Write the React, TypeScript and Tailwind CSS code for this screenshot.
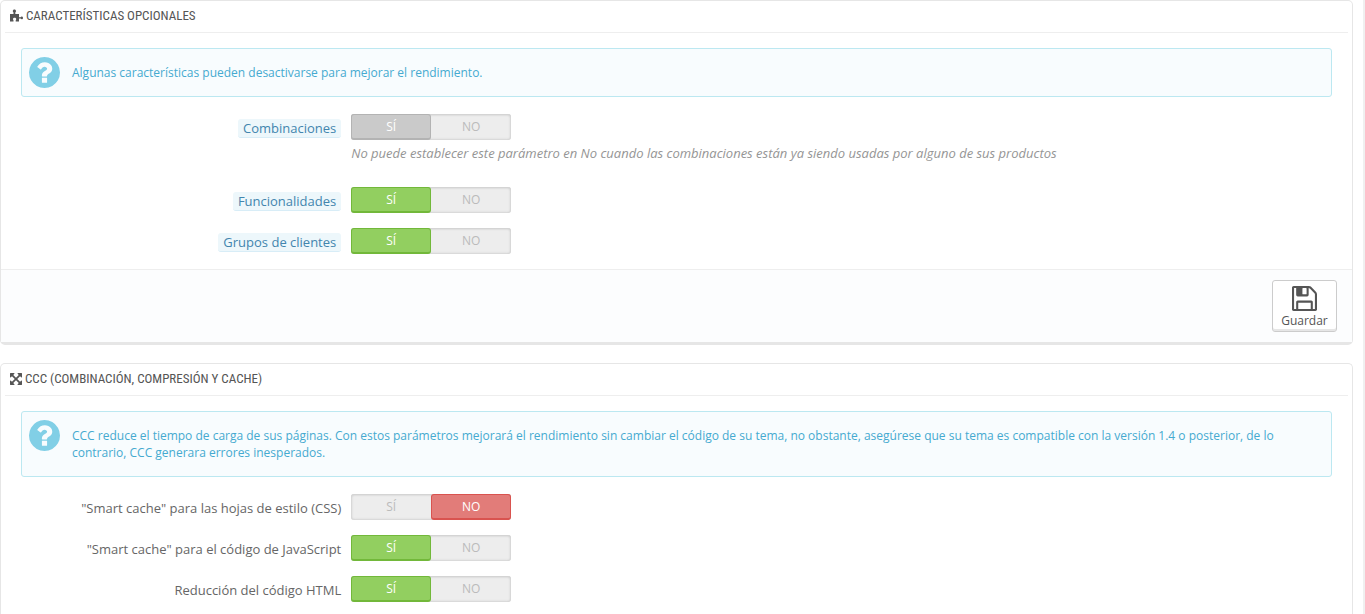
import { useState, type ReactNode } from 'react'

type SwitchTone = 'green' | 'gray'

interface SwitchRowProps {
  name: string
  label: string
  initial: boolean
  tooltip?: boolean
  disabled?: boolean
  help?: string
}

function PuzzleIcon() {
  return (
    <svg viewBox="0 0 13 13" className="w-[13px] h-[13px] shrink-0" fill="currentColor" aria-hidden="true">
      <path d="M0 5h3.500V3.500C2.900 3.100 2.800 2.600 2.800 2.100C2.800 1.100 3.500.5 4.400.5S6 1.100 6 2.100C6 2.600 5.900 3.100 5.300 3.500V5H9v3.200h1.600C10.900 7.700 11.200 7.500 11.700 7.500C12.500 7.500 13 8.100 13 8.900S12.500 10.300 11.700 10.300C11.200 10.300 10.900 10.100 10.600 9.600H9V12.500H5.700V11.200C6 10.800 6.200 10.500 6.200 10C6.200 9.200 5.400 8.700 4.600 8.700S3 9.200 3 10C3 10.500 3.200 10.800 3.500 11.200V12.500H0z" />
    </svg>
  )
}

function ArrowsIcon() {
  return (
    <svg viewBox="128 128 1536 1536" className="w-3 h-3 shrink-0" fill="currentColor" aria-hidden="true">
      <path d="M1411 541l-355 355 355 355 144-144q29-31 70-14 39 17 39 59v448q0 26-19 45t-45 19h-448q-42 0-59-40-17-39 14-69l144-144-355-355-355 355 144 144q31 30 14 69-17 40-59 40h-448q-26 0-45-19t-19-45v-448q0-42 40-59 39-17 69 14l144 144 355-355-355-355-144 144q-19 19-45 19-12 0-24-5-40-17-40-59v-448q0-26 19-45t45-19h448q42 0 59 40 17 39-14 69l-144 144 355 355 355-355-144-144q-31-30-14-69 17-40 59-40h448q26 0 45 19t19 45v448q0 42-39 59-13 5-25 5-26 0-45-19z" />
    </svg>
  )
}

function QuestionIcon() {
  return (
    <svg viewBox="128 128 1536 1536" className="w-[31px] h-[31px] shrink-0 text-[#81cfe6]" fill="currentColor" aria-hidden="true">
      <path d="M1024 1376v-192q0-14-9-23t-23-9h-192q-14 0-23 9t-9 23v192q0 14 9 23t23 9h192q14 0 23-9t9-23zm256-672q0-88-55.500-163t-138.500-116-170-41q-243 0-371 213-15 24 8 42l132 100q7 6 19 6 16 0 25-12 53-68 86-92 34-24 86-24 48 0 85.500 26t37.500 59q0 38-20 61t-68 45q-63 28-115.500 86.500t-52.500 125.500v36q0 14 9 23t23 9h192q14 0 23-9t9-23q0-19 21.500-49.500t54.500-49.500q32-18 49-28.500t46-35 44.500-48 28-60.500 12.500-81zm384 192q0 209-103 385.500t-279.500 279.500-385.500 103-385.500-103-279.500-279.500-103-385.500 103-385.500 279.500-279.500 385.500-103 385.500 103 279.500 279.500 103 385.500z" />
    </svg>
  )
}

function SaveIcon() {
  return (
    <svg viewBox="128 128 1536 1536" className="w-[25px] h-[25px]" fill="currentColor" aria-hidden="true">
      <path d="M512 1536h768v-384h-768v384zm896 0h128v-896q0-14-10-38.500t-20-34.500l-281-281q-10-10-34-20t-39-10v416q0 40-28 68t-68 28h-576q-40 0-68-28t-28-68v-416h-128v1280h128v-416q0-40 28-68t68-28h832q40 0 68 28t28 68v416zm-384-928v-320q0-13-9.500-22.500t-22.500-9.500h-192q-13 0-22.500 9.500t-9.500 22.500v320q0 13 9.500 22.500t22.500 9.500h192q13 0 22.500-9.500t9.500-22.500zm640 32v928q0 40-28 68t-68 28h-1344q-40 0-68-28t-28-68v-1344q0-40 28-68t68-28h928q40 0 88 20t76 48l280 280q28 28 48 76t20 88z" />
    </svg>
  )
}

function PanelHeading({ icon, children }: { icon: ReactNode; children: ReactNode }) {
  return (
    <h3 className="mx-1 h-8 px-[5px] pb-[2px] flex items-center gap-[3px] border-b border-[#eee] font-['Roboto_Condensed','Open_Sans_Condensed',sans-serif] text-[13px] font-normal leading-4 text-[#555] uppercase">
      {icon}
      {children}
    </h3>
  )
}

function InfoAlert({ children }: { children: ReactNode }) {
  return (
    <div className="mb-[17px] flex items-start gap-3 rounded-[3px] border border-[#bce8f1] bg-[#f8fcfe] py-2 pl-[7px] pr-[50px]">
      <QuestionIcon />
      <p className="py-[7px] text-xs leading-[17px] text-[#45aad0]">{children}</p>
    </div>
  )
}

function SwitchRow({ name, label, initial, tooltip = false, disabled = false, help }: SwitchRowProps) {
  const [value, setValue] = useState(initial)
  const tone: SwitchTone = disabled ? 'gray' : 'green'

  const onClasses = {
    green: 'border-[#72b83a] bg-[#92cf60] text-white',
    gray: 'border-[#b3b3b3] bg-[#cacaca] text-white',
  }

  return (
    <div role="radiogroup" aria-labelledby={`${name}-label`} className="-mx-[5px] mb-[15px] flex items-start">
      <div className="w-1/4 shrink-0 px-[5px] pt-[5px] text-right text-[13px] leading-[18px]">
        <span
          id={`${name}-label`}
          className={
            tooltip
              ? 'inline-block rounded-[3px] border-b border-[#d8edf7] bg-[#edf7fb] px-[5px] text-[#4285ae]'
              : 'inline-block text-[#666]'
          }
        >
          {label}
        </span>
      </div>
      <div className="flex-1 px-[5px]">
        <div className="flex h-[26px] w-40 rounded-[3px] bg-[#ededed] text-center text-xs leading-6 text-[#bbb] shadow-[inset_0_0_2px_1px_#d4d4d4,inset_0_1px_2px_#ccc]">
          <label className={`w-1/2 rounded-[3px] border border-b-2 ${value ? onClasses[tone] : 'border-transparent'}`}>
            <input
              type="radio"
              name={name}
              className="sr-only"
              checked={value}
              disabled={disabled}
              onChange={() => setValue(true)}
            />
            SÍ
          </label>
          <label
            className={`w-1/2 rounded-[3px] border border-b-2 ${
              value ? 'border-transparent' : 'border-[#d9534f] bg-[#e27c79] text-white'
            }`}
          >
            <input
              type="radio"
              name={name}
              className="sr-only"
              checked={!value}
              disabled={disabled}
              onChange={() => setValue(false)}
            />
            NO
          </label>
        </div>
        {help && <p className="mt-[5px] mb-[10px] text-[13px] leading-[17px] text-[#959595] italic">{help}</p>}
      </div>
    </div>
  )
}

export default function App() {
  return (
    <main className="flex min-h-screen flex-col gap-[18px] border-r-2 border-[#f0f0f0] bg-white pr-[10px] font-['Open_Sans',sans-serif]">
      <section className="rounded-[5px] border border-b-[3px] border-[#e6e6e6]">
        <PanelHeading icon={<PuzzleIcon />}>Características opcionales</PanelHeading>
        <form onSubmit={(e) => e.preventDefault()}>
          <div className="px-5 pt-[15px]">
            <InfoAlert>Algunas características pueden desactivarse para mejorar el rendimiento.</InfoAlert>
            <SwitchRow
              name="combination"
              label="Combinaciones"
              initial
              tooltip
              disabled
              help="No puede establecer este parámetro en No cuando las combinaciones están ya siendo usadas por alguno de sus productos"
            />
            <SwitchRow name="feature" label="Funcionalidades" initial tooltip />
            <SwitchRow name="customer_group" label="Grupos de clientes" initial tooltip />
          </div>
          <div className="flex justify-end border-t border-[#eee] bg-[#fcfdfe] px-[15px] py-[10px]">
            <button
              type="submit"
              className="flex h-[52px] w-[65px] flex-col items-center rounded-[3px] border border-[#ccc] bg-white pt-[5px] text-xs leading-5 text-[#555] shadow-[inset_0_-2px_0_#e6e6e6]"
            >
              <SaveIcon />
              Guardar
            </button>
          </div>
        </form>
      </section>

      {/* Runs on past the bottom of the window */}
      <section className="flex-1 rounded-t-[5px] border border-b-0 border-[#e6e6e6]">
        <PanelHeading icon={<ArrowsIcon />}>CCC (Combinación, compresión y cache)</PanelHeading>
        <form className="px-5 pt-[15px]">
          <InfoAlert>
            CCC reduce el tiempo de carga de sus páginas. Con estos parámetros mejorará el rendimiento sin cambiar el
            código de su tema, no obstante, asegúrese que su tema es compatible con la versión 1.4 o posterior, de lo
            contrario, CCC generara errores inesperados.
          </InfoAlert>
          <SwitchRow name="smart_cache_css" label={'"Smart cache" para las hojas de estilo (CSS)'} initial={false} />
          <SwitchRow name="smart_cache_js" label={'"Smart cache" para el código de JavaScript'} initial />
          <SwitchRow name="html_minify" label="Reducción del código HTML" initial />
        </form>
      </section>
    </main>
  )
}
